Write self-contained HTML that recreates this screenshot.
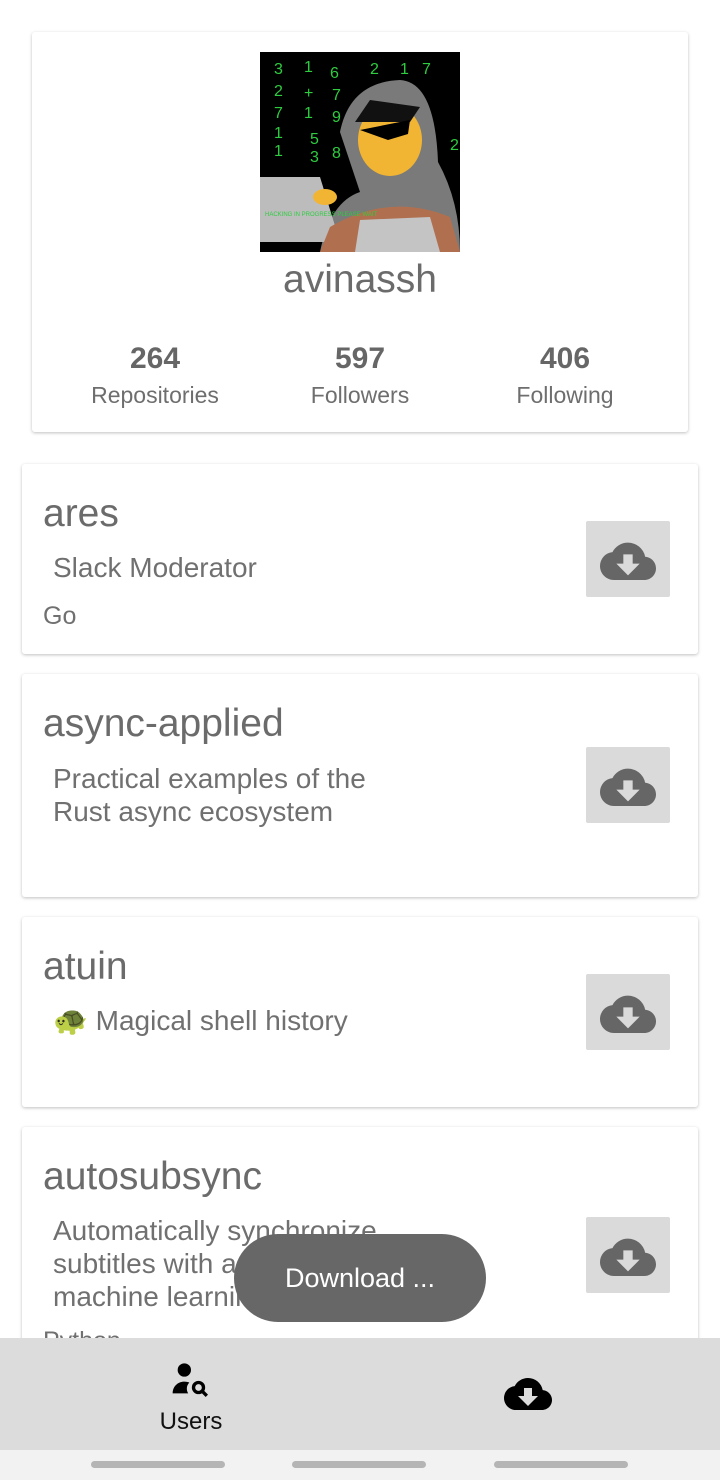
<!DOCTYPE html>
<html><head><meta charset="utf-8"><style>
*{margin:0;padding:0;box-sizing:border-box}
body{width:720px;height:1480px;background:#fff;font-family:"Liberation Sans",Roboto,sans-serif;color:#6e6e6e;position:relative;overflow:hidden}
.card{position:absolute;background:#fff;border-radius:3px;box-shadow:0 1px 3px rgba(0,0,0,.25)}
.stat{position:absolute;text-align:center;width:200px}
.stat b{display:block;font-size:30px;color:#666;font-weight:bold}
.stat span{display:block;font-size:23px;color:#6e6e6e;margin-top:6px}
.rt{position:absolute;left:21px;font-size:39px;color:#6b6b6b}
.rd{position:absolute;left:31px;font-size:28px;line-height:33px;color:#707070;white-space:nowrap}
.lang{position:absolute;left:21px;font-size:25px;color:#707070}
.btn{position:absolute;left:564px;width:84px;height:76px;background:#d9dad9;border-radius:2px;display:flex;align-items:center;justify-content:center}
</style></head><body>
<div class="card" style="left:32px;top:32px;width:656px;height:400px">
<svg style="position:absolute;left:228px;top:20px" width="200" height="200" viewBox="0 0 200 200">
<rect width="200" height="200" fill="#000"/>
<g fill="#2ecc40" font-size="16" font-family="Liberation Sans">
<text x="14" y="22">3</text><text x="44" y="20">1</text><text x="70" y="26">6</text><text x="110" y="22">2</text><text x="140" y="22">1</text><text x="162" y="22">7</text>
<text x="14" y="44">2</text><text x="44" y="46">+</text><text x="72" y="48">7</text><text x="14" y="66">7</text><text x="44" y="66">1</text><text x="72" y="70">9</text><text x="14" y="86">1</text><text x="50" y="92">5</text><text x="14" y="104">1</text><text x="50" y="110">3</text><text x="72" y="106">8</text><text x="190" y="98">2</text></g>
<path d="M80 80 Q90 30 140 28 Q175 30 178 110 Q200 150 200 200 L60 200 Q70 150 100 140 Z" fill="#7a7a7a"/>
<ellipse cx="130" cy="88" rx="32" ry="36" fill="#f2b533"/>
<path d="M95 70 L110 48 L160 55 L150 70 Z" fill="#111"/>
<path d="M100 78 L150 68 L148 82 L128 88 Z" fill="#000"/>
<path d="M0 125 L60 125 L80 190 L0 190 Z" fill="#bcbcbc"/>
<path d="M70 175 Q130 140 190 165 L200 200 L60 200 Z" fill="#b07050"/>
<path d="M100 168 L170 165 L180 200 L95 200 Z" fill="#c4c4c4"/>
<ellipse cx="65" cy="145" rx="12" ry="8" fill="#f2b533"/>
<text x="5" y="164" font-size="6" fill="#2ecc40" font-family="Liberation Sans">HACKING IN PROGRESS PLEASE WAIT</text>
</svg>
<div style="position:absolute;top:226px;width:100%;text-align:center;font-size:39px;color:#6b6b6b">avinassh</div>
<div class="stat" style="left:23px;top:310px"><b>264</b><span>Repositories</span></div>
<div class="stat" style="left:228px;top:310px"><b>597</b><span>Followers</span></div>
<div class="stat" style="left:433px;top:310px"><b>406</b><span>Following</span></div>
</div>

<div class="card" style="left:22px;top:464px;width:676px;height:190px">
<div class="rt" style="top:28px">ares</div>
<div class="rd" style="top:87px">Slack Moderator</div>
<div class="lang" style="top:138px">Go</div>
<div class="btn" style="top:57px"><svg width="56" height="44" viewBox="0 2 24 18"><path fill="#666" d="M19.35 10.04A7.49 7.49 0 0 0 12 4C9.11 4 6.6 5.64 5.35 8.04A5.994 5.994 0 0 0 0 14c0 3.31 2.69 6 6 6h13c2.76 0 5-2.24 5-5 0-2.64-2.05-4.78-4.65-4.96zM17 13l-5 5-5-5h3V9h4v4h3z"/></svg></div>
</div>

<div class="card" style="left:22px;top:674px;width:676px;height:223px">
<div class="rt" style="top:28px">async-applied</div>
<div class="rd" style="top:88px">Practical examples of the<br>Rust async ecosystem</div>
<div class="btn" style="top:73px"><svg width="56" height="44" viewBox="0 2 24 18"><path fill="#666" d="M19.35 10.04A7.49 7.49 0 0 0 12 4C9.11 4 6.6 5.64 5.35 8.04A5.994 5.994 0 0 0 0 14c0 3.31 2.69 6 6 6h13c2.76 0 5-2.24 5-5 0-2.64-2.05-4.78-4.65-4.96zM17 13l-5 5-5-5h3V9h4v4h3z"/></svg></div>
</div>

<div class="card" style="left:22px;top:917px;width:676px;height:190px">
<div class="rt" style="top:28px">atuin</div>
<div class="rd" style="top:87px">🐢 Magical shell history</div>
<div class="btn" style="top:57px"><svg width="56" height="44" viewBox="0 2 24 18"><path fill="#666" d="M19.35 10.04A7.49 7.49 0 0 0 12 4C9.11 4 6.6 5.64 5.35 8.04A5.994 5.994 0 0 0 0 14c0 3.31 2.69 6 6 6h13c2.76 0 5-2.24 5-5 0-2.64-2.05-4.78-4.65-4.96zM17 13l-5 5-5-5h3V9h4v4h3z"/></svg></div>
</div>

<div class="card" style="left:22px;top:1127px;width:676px;height:260px">
<div class="rt" style="top:28px">autosubsync</div>
<div class="rd" style="top:87px">Automatically synchronize<br>subtitles with audio using<br>machine learning</div>
<div class="lang" style="top:200px">Python</div>
<div class="btn" style="top:90px"><svg width="56" height="44" viewBox="0 2 24 18"><path fill="#666" d="M19.35 10.04A7.49 7.49 0 0 0 12 4C9.11 4 6.6 5.64 5.35 8.04A5.994 5.994 0 0 0 0 14c0 3.31 2.69 6 6 6h13c2.76 0 5-2.24 5-5 0-2.64-2.05-4.78-4.65-4.96zM17 13l-5 5-5-5h3V9h4v4h3z"/></svg></div>
</div>

<div style="position:absolute;left:234px;top:1234px;width:252px;height:88px;border-radius:44px;background:#676767;color:#fff;font-size:27px;display:flex;align-items:center;justify-content:center">Download ...</div>

<div style="position:absolute;left:0;top:1338px;width:720px;height:112px;background:#dcdcdc">
<svg style="position:absolute;left:170px;top:22px" width="42" height="40" viewBox="0 0 24 24"><circle cx="8" cy="6" r="4"/><path d="M1 20c0-4 3-7 7-7 1.5 0 2.5.3 3 .6-1 1-1.5 2.2-1.5 3.6 0 1 .3 2 .8 2.8z"/><circle cx="16.5" cy="16.5" r="3" fill="none" stroke="#000" stroke-width="2"/><path d="M18.5 18.5l3 3" stroke="#000" stroke-width="2"/></svg>
<div style="position:absolute;left:0;width:382px;top:70px;text-align:center;font-size:24px;color:#111">Users</div>
<svg style="position:absolute;left:504px;top:36px" width="48" height="40" viewBox="0 0 24 20"><path d="M19.35 8.04A7.49 7.49 0 0 0 12 2C9.110 2 6.6 3.64 5.35 6.04A5.994 5.994 0 0 0 0 12c0 3.31 2.69 6 6 6h13c2.76 0 5-2.24 5-5 0-2.64-2.05-4.78-4.65-4.96zM17 11l-5 5-5-5h3V7h4v4h3z"/></svg>
</div>
<div style="position:absolute;left:0;top:1450px;width:720px;height:30px;background:#f2f2f2">
<div style="position:absolute;left:91px;top:11px;width:134px;height:7px;border-radius:4px;background:#b5b5b5"></div>
<div style="position:absolute;left:292px;top:11px;width:134px;height:7px;border-radius:4px;background:#b5b5b5"></div>
<div style="position:absolute;left:494px;top:11px;width:134px;height:7px;border-radius:4px;background:#b5b5b5"></div>
</div>
</body></html>
